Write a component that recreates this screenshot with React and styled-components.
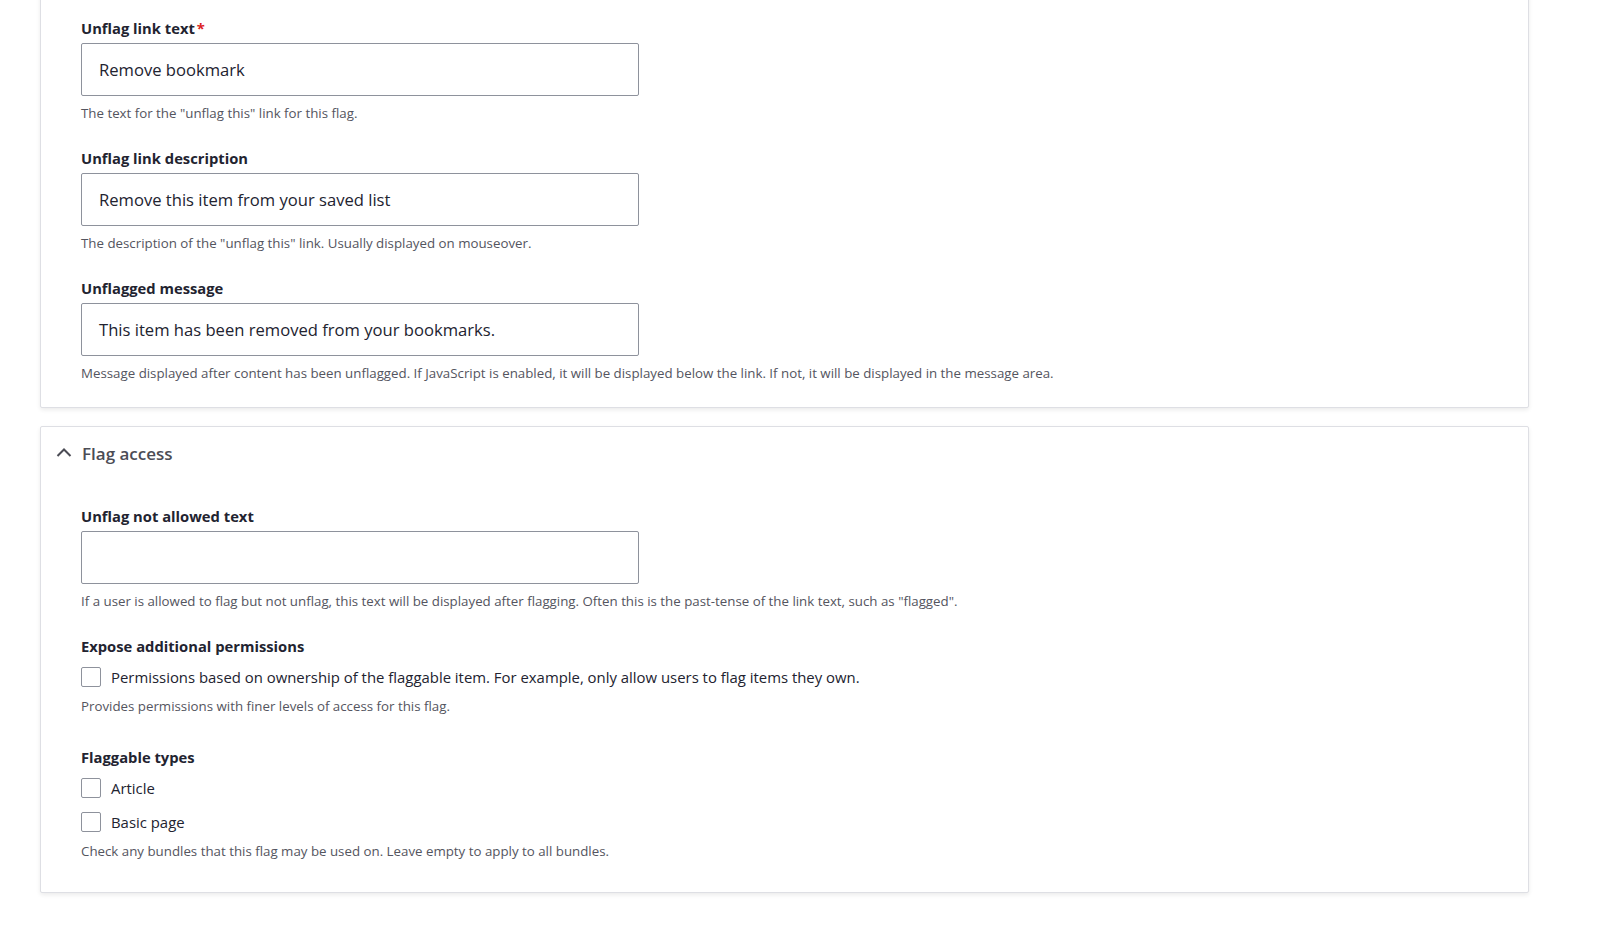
import React from "react";
import styled, { createGlobalStyle } from "styled-components";

const GlobalStyle = createGlobalStyle`
    body {
        margin: 0;
        background: #ffffff;
        font-family: "Open Sans", "Noto Sans", sans-serif;
        color: #222330;
    }
`;

const Page = styled.div`
    padding: 0 70px 0 40px;
    height: 925px;
    overflow: hidden;
`;

const Card = styled.div`
    border: 1px solid #dedfe4;
    border-radius: 2px;
    background: #ffffff;
    box-shadow: 0 2px 4px rgba(0, 0, 0, 0.08);
    margin-top: ${(p) => (p.$first ? "-10px" : "18px")};
    padding: ${(p) => (p.$first ? "27px 40px 25px" : "0 40px 32px")};
`;

const Summary = styled.div`
    display: flex;
    align-items: center;
    gap: 10px;
    margin-left: -25px;
    height: 52px;
    margin-bottom: 27px;
    font-size: 17px;
    font-weight: 600;
    color: #4b4c55;
`;

const Item = styled.div`
    margin-bottom: ${(p) => p.$mb || "26px"};
    margin-top: ${(p) => p.$mt || "0"};
`;

const Label = styled.div`
    font-size: 14.75px;
    font-weight: 700;
    line-height: 20px;
    margin-bottom: ${(p) => p.$mb || "5px"};
`;

const Required = styled.span`
    color: #dc2323;
    margin-left: 2px;
`;

const TextInput = styled.div`
    box-sizing: border-box;
    width: 558px;
    height: 53px;
    border: 1px solid #8e929c;
    border-radius: 2px;
    padding: 0 17px;
    display: flex;
    align-items: center;
    font-size: 16.6px;
    color: #222330;
`;

const Description = styled.div`
    font-size: 13.3px;
    line-height: 18px;
    color: #545560;
    margin-top: 8px;
`;

const CheckRow = styled.div`
    display: flex;
    align-items: center;
    height: 24px;
    gap: 10px;
    font-size: 14.9px;
    margin-bottom: ${(p) => p.$mb || "0"};
`;

const Box = styled.span`
    box-sizing: border-box;
    width: 20px;
    height: 20px;
    border: 1px solid #8e929c;
    border-radius: 2px;
    background: #ffffff;
    flex-shrink: 0;
`;

const Chevron = () => (
    <svg width="16" height="12" viewBox="0 0 16 12">
        <path d="M1.5 9 L8 2.5 L14.5 9" fill="none" stroke="#4b4c55" strokeWidth="2" />
    </svg>
);

const App = () => {
    return (
        <>
            <GlobalStyle />
            <Page>
                <Card $first>
                    <Item>
                        <Label>
                            Unflag link text<Required>*</Required>
                        </Label>
                        <TextInput>Remove bookmark</TextInput>
                        <Description>The text for the "unflag this" link for this flag.</Description>
                    </Item>
                    <Item>
                        <Label>Unflag link description</Label>
                        <TextInput>Remove this item from your saved list</TextInput>
                        <Description>The description of the "unflag this" link. Usually displayed on mouseover.</Description>
                    </Item>
                    <Item $mb="0">
                        <Label>Unflagged message</Label>
                        <TextInput>This item has been removed from your bookmarks.</TextInput>
                        <Description>
                            Message displayed after content has been unflagged. If JavaScript is enabled, it will be displayed below the link. If not, it will be displayed in the message area.
                        </Description>
                    </Item>
                </Card>
                <Card>
                    <Summary>
                        <Chevron />
                        Flag access
                    </Summary>
                    <Item>
                        <Label>Unflag not allowed text</Label>
                        <TextInput />
                        <Description>
                            If a user is allowed to flag but not unflag, this text will be displayed after flagging. Often this is the past-tense of the link text, such as "flagged".
                        </Description>
                    </Item>
                    <Item>
                        <Label $mb="9px">Expose additional permissions</Label>
                        <CheckRow>
                            <Box />
                            Permissions based on ownership of the flaggable item. For example, only allow users to flag items they own.
                        </CheckRow>
                        <Description>Provides permissions with finer levels of access for this flag.</Description>
                    </Item>
                    <Item $mt="32px" $mb="0">
                        <Label $mb="9px">Flaggable types</Label>
                        <CheckRow $mb="10px">
                            <Box />
                            Article
                        </CheckRow>
                        <CheckRow>
                            <Box />
                            Basic page
                        </CheckRow>
                        <Description>Check any bundles that this flag may be used on. Leave empty to apply to all bundles.</Description>
                    </Item>
                </Card>
            </Page>
        </>
    );
};

export default App;
